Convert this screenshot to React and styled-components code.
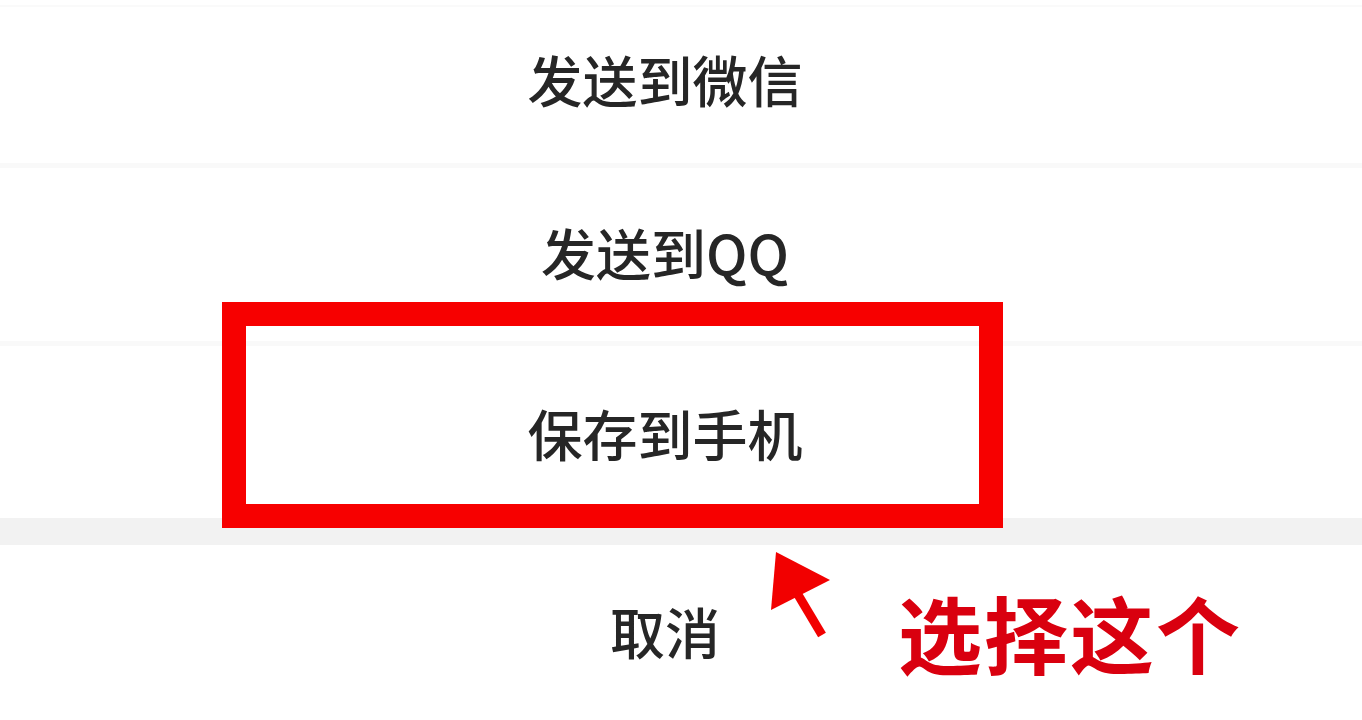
import React from "react";
import styled, { createGlobalStyle } from "styled-components";

const GlobalStyle = createGlobalStyle`
  html, body {
    margin: 0;
    padding: 0;
    background: #ffffff;
  }
  body {
    font-family: "Noto Sans CJK SC", "Noto Sans", sans-serif;
  }
`;

const actions = [
  { label: "发送到微信", height: 163, offset: 0 },
  { label: "发送到QQ", height: 173, offset: 0 },
  { label: "保存到手机", height: 172, offset: 6 },
];

function App() {
  return (
    <>
      <GlobalStyle />
      <Page>
        <Sheet>
          <TopLine />
          {actions.map((a, i) => (
            <React.Fragment key={i}>
              <ActionRow height={a.height} offset={a.offset} first={i === 0}>
                <ActionText>{a.label}</ActionText>
              </ActionRow>
              {i < actions.length - 1 && <Divider />}
            </React.Fragment>
          ))}
          <GapBand />
          <CancelRow>
            <ActionText>取消</ActionText>
          </CancelRow>
        </Sheet>

        <Highlight />
        <Arrow viewBox="0 0 80 105">
          <polygon points="16,12 70,40 11,70" fill="#f20000" />
          <line
            x1="34"
            y1="48"
            x2="62"
            y2="95"
            stroke="#f20000"
            strokeWidth="9"
          />
        </Arrow>
        <Callout>选择这个</Callout>
      </Page>
    </>
  );
}

export default App;

const Page = styled.div`
  position: relative;
  width: 1362px;
  height: 720px;
  overflow: hidden;
  background: #ffffff;
`;

const Sheet = styled.div`
  display: flex;
  flex-direction: column;
  width: 100%;
  height: 100%;
`;

const TopLine = styled.div`
  height: 2px;
  margin-top: 5px;
  background: #fafafa;
  flex-shrink: 0;
`;

const ActionRow = styled.div`
  display: flex;
  align-items: center;
  justify-content: center;
  height: ${(p) => p.height}px;
  padding: ${(p) => p.offset}px 32px 6px 0;
  box-sizing: border-box;
  flex-shrink: 0;
  margin-top: ${(p) => (p.first ? -7 : 0)}px;
`;

const ActionText = styled.span`
  font-family: "Noto Sans CJK SC", "Noto Sans", sans-serif;
  font-size: 55px;
  font-weight: 500;
  color: #262626;
  line-height: 1;
`;

const Divider = styled.div`
  height: 5px;
  background: #f9f9f9;
  flex-shrink: 0;
`;

const GapBand = styled.div`
  height: 27px;
  background: #f2f2f2;
  flex-shrink: 0;
`;

const CancelRow = styled.div`
  display: flex;
  align-items: center;
  justify-content: center;
  height: 175px;
  padding: 0 32px 4px 0;
  box-sizing: border-box;
  flex-shrink: 0;
`;

const Highlight = styled.div`
  position: absolute;
  left: 222px;
  top: 302px;
  width: 781px;
  height: 226px;
  box-sizing: border-box;
  border: 24px solid #f70000;
`;

const Arrow = styled.svg`
  position: absolute;
  left: 760px;
  top: 540px;
  width: 80px;
  height: 105px;
`;

const Callout = styled.div`
  position: absolute;
  left: 898px;
  top: 590px;
  font-family: "Noto Sans CJK SC", "Noto Sans", sans-serif;
  font-size: 84px;
  font-weight: 700;
  line-height: 1;
  color: #d9000f;
  letter-spacing: 2px;
`;
